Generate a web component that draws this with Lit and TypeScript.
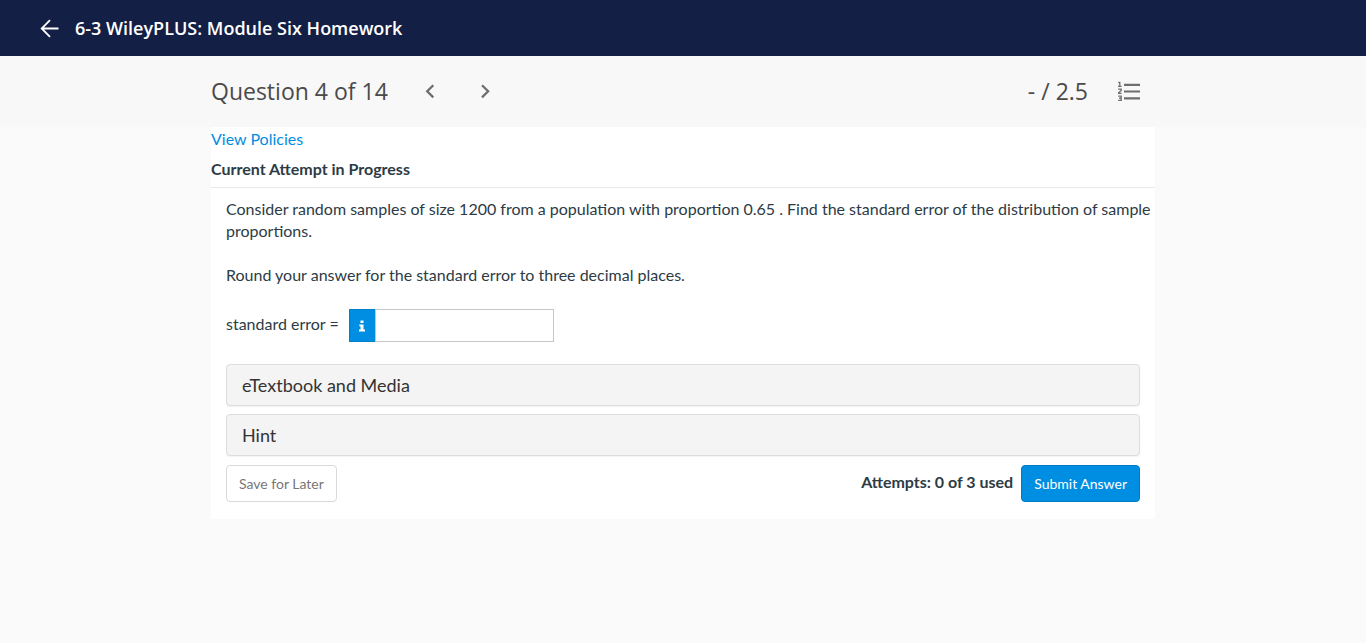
import { LitElement, html, css } from "lit";
import { customElement, property, state } from "lit/decorators.js";

@customElement("assignment-header")
class AssignmentHeader extends LitElement {
  @property() heading = "";

  static styles = css`
    :host {
      display: block;
      background: #141f45;
      color: #fff;
      font-family: "Open Sans", "Noto Sans", sans-serif;
    }
    .bar {
      display: flex;
      align-items: center;
      height: 56px;
      padding: 0 38px;
      gap: 13px;
    }
    .back {
      display: flex;
      width: 24px;
      height: 24px;
      color: inherit;
    }
    .title {
      margin: 0;
      font-size: 18px;
      font-weight: 600;
      line-height: 24px;
    }
  `;

  render() {
    return html`
      <header class="bar">
        <a class="back" href="#" aria-label="Back">
          <svg width="24" height="24" viewBox="0 0 24 24" fill="none" stroke="currentColor" stroke-width="1.8">
            <path d="M20.5 12.5H4M12 4.2L3.7 12.5L12 20.8" />
          </svg>
        </a>
        <h1 class="title">${this.heading}</h1>
      </header>
    `;
  }
}

@customElement("question-toolbar")
class QuestionToolbar extends LitElement {
  @property({ type: Number }) current = 1;
  @property({ type: Number }) total = 1;
  @property() score = "";

  static styles = css`
    :host {
      display: block;
      background: #f8f8f8;
      color: #4a4a4a;
      font-family: "Open Sans", "Noto Sans", sans-serif;
    }
    .inner {
      display: flex;
      align-items: center;
      box-sizing: border-box;
      max-width: 944px;
      height: 71px;
      margin: 0 auto;
      padding: 0 14px 1px 0;
    }
    .label,
    .score {
      font-size: 23px;
      line-height: 32px;
      white-space: nowrap;
    }
    .label {
      min-width: 174px;
      margin: 0;
      font-weight: 400;
    }
    .nav {
      display: flex;
      gap: 31px;
      margin-left: 30px;
    }
    .score {
      margin-left: auto;
      margin-right: 29px;
    }
    .icon {
      display: flex;
      padding: 0;
      border: 0;
      background: none;
      color: #6e6e6e;
      cursor: pointer;
    }
  `;

  render() {
    return html`
      <div class="inner">
        <h2 class="label">Question ${this.current} of ${this.total}</h2>
        <nav class="nav">
          <button class="icon" aria-label="Previous question">
            <svg width="24" height="24" viewBox="0 0 24 24" fill="none" stroke="currentColor" stroke-width="2.3">
              <path d="M15.3 6.2L9.2 12.3l6.1 6.1" />
            </svg>
          </button>
          <button class="icon" aria-label="Next question">
            <svg width="24" height="24" viewBox="0 0 24 24" fill="none" stroke="currentColor" stroke-width="2.3">
              <path d="M9 6.2l6.1 6.1L9 18.4" />
            </svg>
          </button>
        </nav>
        <span class="score">${this.score}</span>
        <button class="icon" aria-label="Question list">
          <svg width="24" height="24" viewBox="0 0 24 24" fill="none" stroke="currentColor">
            <path stroke-width="2.2" d="M7 5.8h16M7 12.5h16M7 19.3h16" />
            <path stroke-width="1.3" d="M1.3 3.5h1.5v4.2M1 7.3h3.6M1.2 10.2h3v1.2L1.6 13.8v.6h3M1.2 17.1h3v4.2h-3M2 19.2h2.2" />
          </svg>
        </button>
      </div>
    `;
  }
}

@customElement("question-card")
class QuestionCard extends LitElement {
  @state() private answer = "";

  static styles = css`
    :host {
      display: block;
      box-sizing: border-box;
      max-width: 944px;
      margin: 0 auto;
      background: #fff;
      color: #2d3b45;
      font: 16px/22px Lato, sans-serif;
    }
    .top {
      padding: 1px 0 7px;
      border-bottom: 1px solid #e8eaec;
    }
    .policies {
      display: block;
      width: max-content;
      color: #008ee2;
      text-decoration: none;
    }
    .attempt {
      margin: 8px 0 0;
      font-size: 16px;
      font-weight: 700;
    }
    .question {
      padding: 10px 0 0 15px;
    }
    .body {
      padding: 1px 15px 17px;
    }
    .text {
      margin: 0 0 22px;
    }
    .answer {
      display: flex;
      align-items: flex-start;
      gap: 10px;
      margin-bottom: 22px;
    }
    .name {
      padding-top: 4px;
    }
    .field {
      display: flex;
      height: 33px;
    }
    .info {
      display: flex;
      align-items: center;
      justify-content: center;
      box-sizing: border-box;
      width: 26px;
      padding: 0;
      border: 1px solid #0080cb;
      border-right: 0;
      border-radius: 1px 0 0 1px;
      background: #008ee2;
      color: #fff;
    }
    .input {
      box-sizing: border-box;
      width: 179px;
      margin: 0;
      padding: 4px 8px;
      border: 1px solid #c7c7c7;
      border-radius: 0;
      background: #fff;
      font: inherit;
      color: inherit;
      outline: none;
    }
    .panel {
      display: block;
      box-sizing: border-box;
      width: 100%;
      height: 42px;
      margin: 0 0 8px;
      padding: 0 15px;
      border: 1px solid #ddd;
      border-radius: 4px;
      background: #f4f4f4;
      box-shadow: 0 1px 1px rgba(0, 0, 0, 0.05);
      color: #333;
      font: 18px/22px Lato, sans-serif;
      text-align: left;
      cursor: pointer;
    }
    .actions {
      display: flex;
      align-items: center;
      padding-top: 1px;
    }
    .used {
      margin: 0 8px 4px auto;
      font-weight: 700;
    }
    .button {
      box-sizing: border-box;
      height: 37px;
      padding: 0 12px;
      border: 1px solid #d9d9d9;
      border-radius: 4px;
      background: #fff;
      color: #777;
      font: 14px/20px Lato, sans-serif;
      cursor: pointer;
    }
    .primary {
      border-color: #0079c1;
      background: #008ee2;
      color: #fff;
    }
  `;

  private onInput(event: Event) {
    this.answer = (event.target as HTMLInputElement).value;
  }

  render() {
    return html`
      <div class="top">
        <a class="policies" href="#">View Policies</a>
        <h3 class="attempt">Current Attempt in Progress</h3>
      </div>
      <div class="question">
        <p class="text">
          Consider random samples of size 1200 from a population with proportion 0.65 . Find the standard error of the
          distribution of sample proportions.
        </p>
        <p class="text">Round your answer for the standard error to three decimal places.</p>
      </div>
      <div class="body">
        <div class="answer">
          <label class="name" for="answer">standard error =</label>
          <div class="field">
            <button class="info" aria-label="Input information">
              <svg width="6" height="12" viewBox="0 0 6 12" fill="currentColor">
                <path d="M1.5 0.5h3v2.5h-3zM0.3 4.4h4.2v5.2H6v1.9H0V9.6h1.5V6.3H0.3z" />
              </svg>
            </button>
            <input class="input" id="answer" type="text" .value=${this.answer} @input=${this.onInput} />
          </div>
        </div>
        <button class="panel">eTextbook and Media</button>
        <button class="panel">Hint</button>
        <div class="actions">
          <button class="button">Save for Later</button>
          <span class="used">Attempts: 0 of 3 used</span>
          <button class="button primary">Submit Answer</button>
        </div>
      </div>
    `;
  }
}

@customElement("app-root")
class AppRoot extends LitElement {
  static styles = css`
    :host {
      display: block;
      min-height: 100vh;
      background: #fafafa;
    }
  `;

  render() {
    return html`
      <assignment-header heading="6-3 WileyPLUS: Module Six Homework"></assignment-header>
      <main>
        <question-toolbar current="4" total="14" score="- / 2.5"></question-toolbar>
        <question-card></question-card>
      </main>
    `;
  }
}
